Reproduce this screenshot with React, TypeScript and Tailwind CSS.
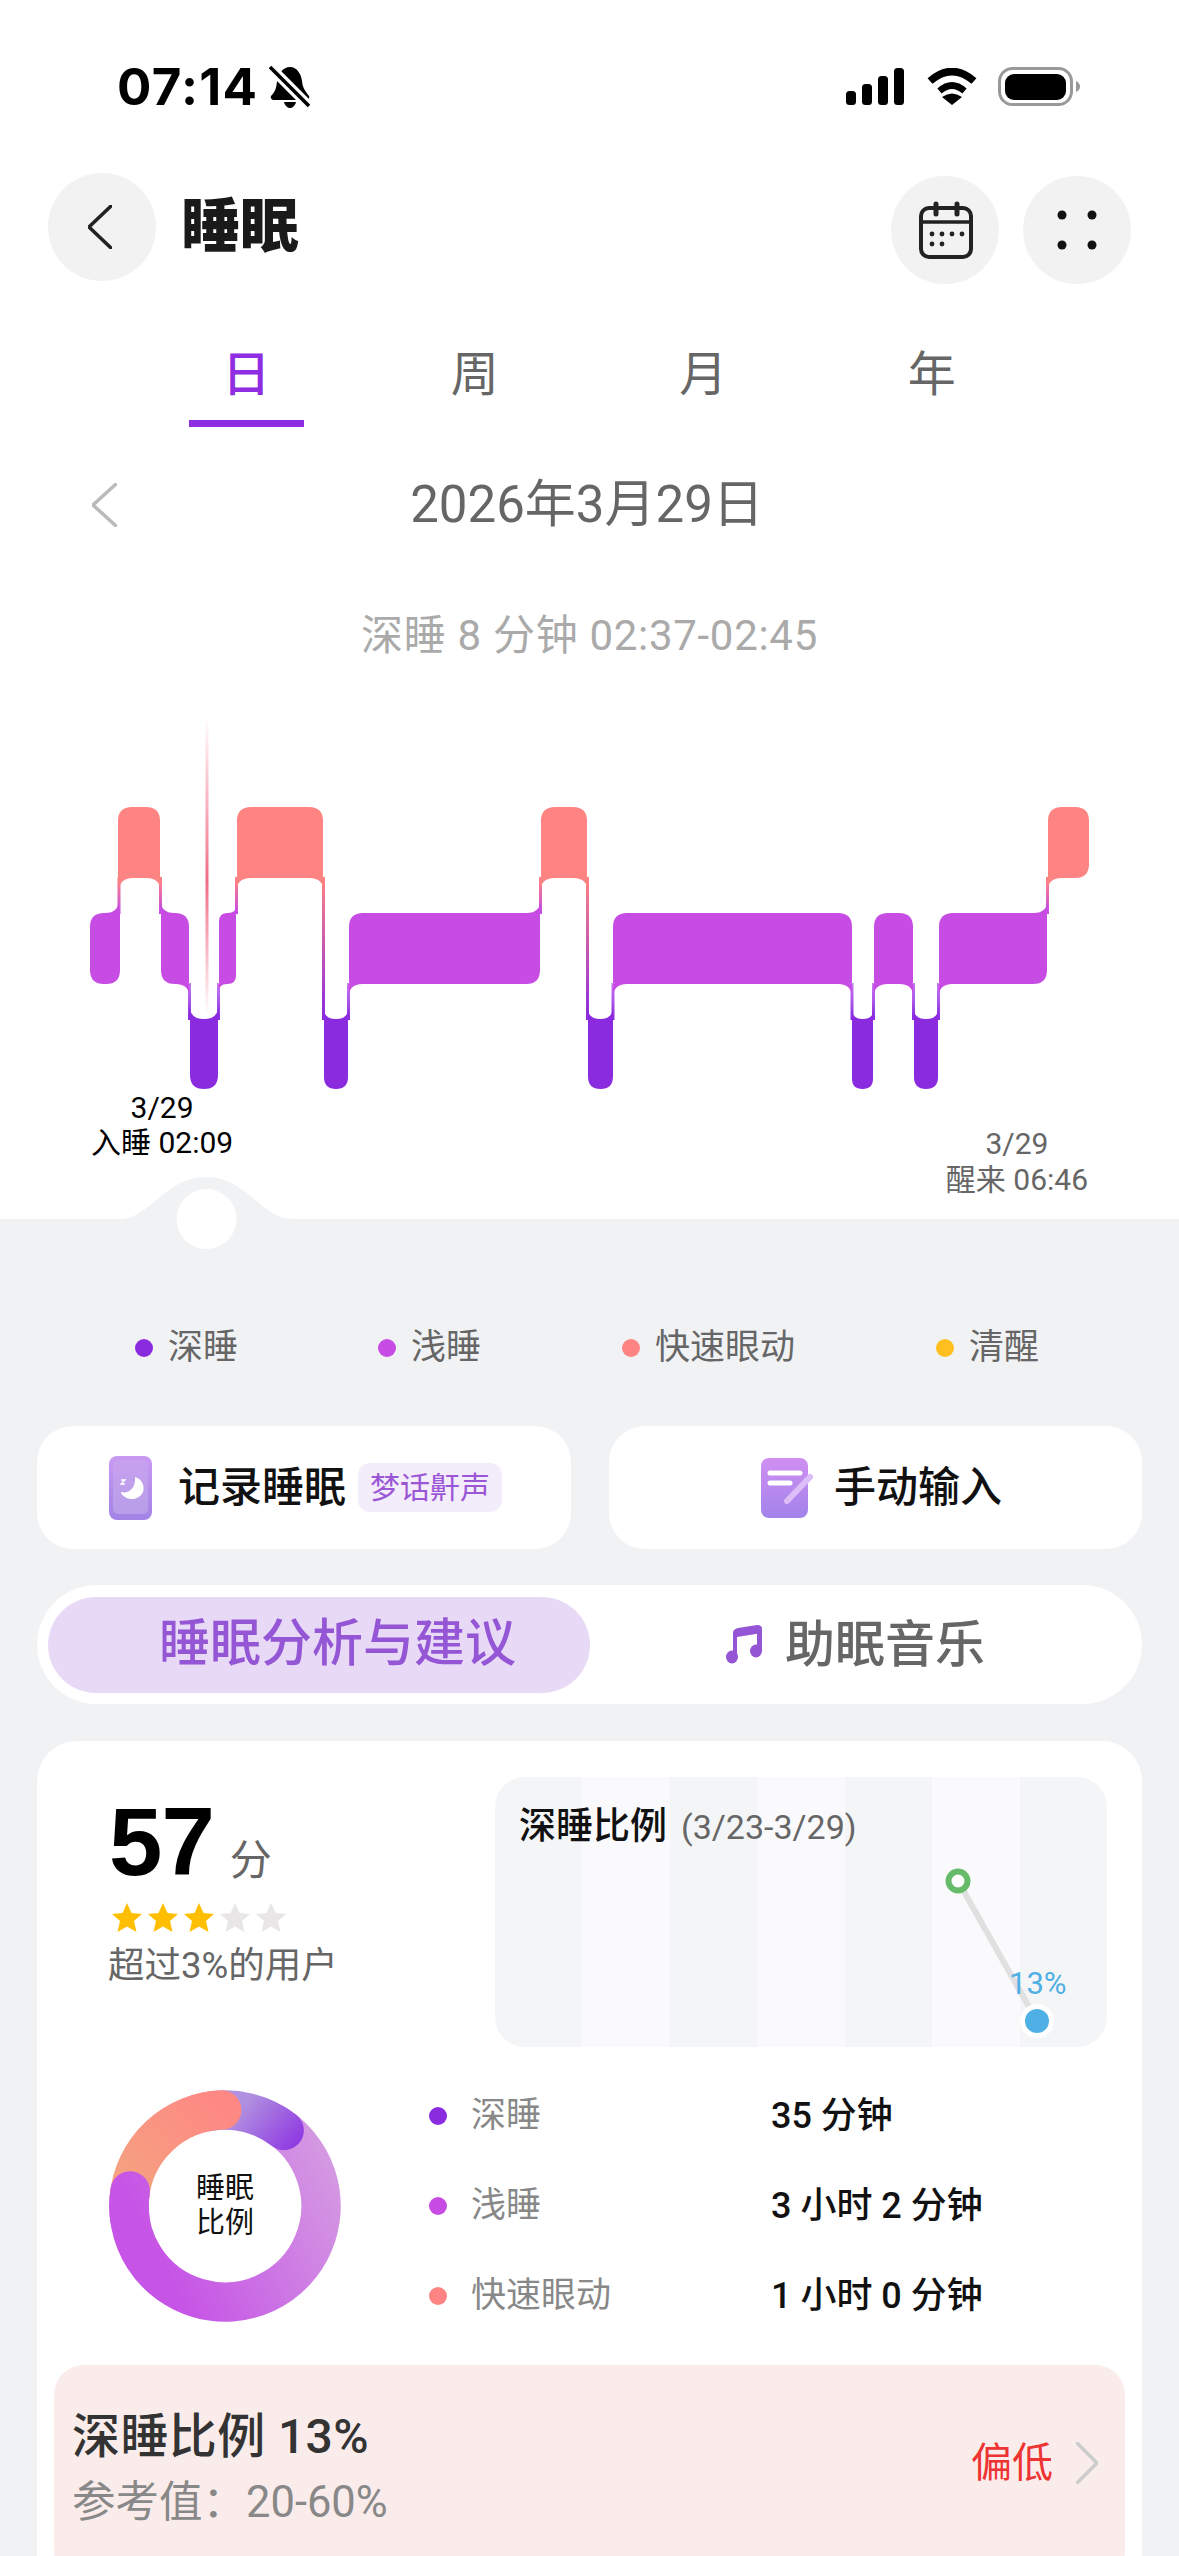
import React from 'react';

type Bar = { x0: number; x1: number; level: 'P' | 'L' | 'D' };

const LEVELS = {
  P: { top: 807, bottom: 878, color: '#fe8383' },
  L: { top: 913, bottom: 984, color: '#c74ce3' },
  D: { top: 1019, bottom: 1089, color: '#8b2be0' },
};

const BARS: Bar[] = [
  { x0: 90, x1: 120, level: 'L' },
  { x0: 118, x1: 160, level: 'P' },
  { x0: 161, x1: 189, level: 'L' },
  { x0: 190, x1: 218, level: 'D' },
  { x0: 219, x1: 236, level: 'L' },
  { x0: 237, x1: 323, level: 'P' },
  { x0: 324, x1: 348, level: 'D' },
  { x0: 349, x1: 540, level: 'L' },
  { x0: 541, x1: 587, level: 'P' },
  { x0: 588, x1: 613, level: 'D' },
  { x0: 613, x1: 852, level: 'L' },
  { x0: 852, x1: 873, level: 'D' },
  { x0: 874, x1: 913, level: 'L' },
  { x0: 914, x1: 938, level: 'D' },
  { x0: 939, x1: 1047, level: 'L' },
  { x0: 1048, x1: 1089, level: 'P' },
];

const order = { P: 0, L: 1, D: 2 };

// rounded rect, only corners facing free space get a radius
function barPath(b: Bar, prev?: Bar, next?: Bar) {
  const { top, bottom } = LEVELS[b.level];
  const r = Math.min(14, (b.x1 - b.x0) / 2);
  const tl = prev && order[prev.level] < order[b.level] ? 0 : r;
  const bl = prev && order[prev.level] > order[b.level] ? 0 : r;
  const tr = next && order[next.level] < order[b.level] ? 0 : r;
  const br = next && order[next.level] > order[b.level] ? 0 : r;
  return `M${b.x0 + tl} ${top} H${b.x1 - tr} Q${b.x1} ${top} ${b.x1} ${top + tr} V${bottom - br} Q${b.x1} ${bottom} ${b.x1 - br} ${bottom} H${b.x0 + bl} Q${b.x0} ${bottom} ${b.x0} ${bottom - bl} V${top + tl} Q${b.x0} ${top} ${b.x0 + tl} ${top} Z`;
}

function SleepChart() {
  return (
    <svg width="1179" height="390" viewBox="0 700 1179 390" className="block">
      <defs>
        <linearGradient id="pulse" x1="0" y1="718" x2="0" y2="1015" gradientUnits="userSpaceOnUse">
          <stop offset="0" stopColor="#f0506e" stopOpacity="0" />
          <stop offset="0.55" stopColor="#f0506e" stopOpacity="0.85" />
          <stop offset="1" stopColor="#f0506e" stopOpacity="0" />
        </linearGradient>
        <linearGradient id="PL" x1="0" y1="878" x2="0" y2="913" gradientUnits="userSpaceOnUse">
          <stop offset="0" stopColor="#fe8383" />
          <stop offset="1" stopColor="#c74ce3" />
        </linearGradient>
        <linearGradient id="LD" x1="0" y1="984" x2="0" y2="1019" gradientUnits="userSpaceOnUse">
          <stop offset="0" stopColor="#c77cf0" />
          <stop offset="1" stopColor="#8b2be0" />
        </linearGradient>
        <linearGradient id="PD" x1="0" y1="878" x2="0" y2="1019" gradientUnits="userSpaceOnUse">
          <stop offset="0" stopColor="#fe8383" />
          <stop offset="1" stopColor="#8b2be0" />
        </linearGradient>
      </defs>
      <rect x="205.5" y="718" width="3" height="297" fill="url(#pulse)" />
      {BARS.map((b, i) => (
        <path key={i} d={barPath(b, BARS[i - 1], BARS[i + 1])} fill={LEVELS[b.level].color} />
      ))}
      {BARS.slice(0, -1).map((a, i) => {
        const b = BARS[i + 1];
        const B = (a.x1 + b.x0) / 2;
        const upper = order[a.level] < order[b.level] ? a : b;
        const lower = upper === a ? b : a;
        const upDir = upper === a ? -1 : 1;
        const yUp = LEVELS[upper.level].bottom;
        const yLow = LEVELS[lower.level].top;
        const ru = Math.min(14, (upper.x1 - upper.x0) / 2);
        const rl = Math.min(14, (lower.x1 - lower.x0) / 2);
        const grad = `${upper.level}${lower.level}`;
        return (
          <g key={i}>
            <rect x={B - 1.5} y={yUp - 1} width="3" height={yLow - yUp + 2} fill={`url(#${grad})`} />
            <path
              d={`M${B} ${yUp} L${B + upDir * ru} ${yUp} Q${B} ${yUp} ${B} ${yUp + ru} Z`}
              fill={LEVELS[upper.level].color}
            />
            <path
              d={`M${B} ${yLow} L${B - upDir * rl} ${yLow} Q${B} ${yLow} ${B} ${yLow - rl} Z`}
              fill={LEVELS[lower.level].color}
            />
          </g>
        );
      })}
    </svg>
  );
}

function StatusIcons() {
  return (
    <div className="flex items-center">
      <svg width="58" height="38" viewBox="0 0 58 38" fill="#000">
        <rect x="0" y="23" width="10" height="14" rx="3.5" />
        <rect x="16" y="16" width="10" height="21" rx="3.5" />
        <rect x="32" y="8" width="10" height="29" rx="3.5" />
        <rect x="48" y="0" width="10" height="37" rx="3.5" />
      </svg>
      <svg width="50" height="38" viewBox="0 0 50 38" fill="none" className="ml-[23px]">
        <path d="M3 13 Q25 -6 47 13" stroke="#000" strokeWidth="7.5" />
        <path d="M12.5 23 Q25 12 37.5 23" stroke="#000" strokeWidth="6.5" />
        <path d="M25 37 L15 29 Q25 22 35 29 Z" fill="#000" />
      </svg>
      <svg width="83" height="40" viewBox="0 0 83 40" className="ml-[21px]">
        <rect x="1.5" y="1.5" width="72" height="36" rx="13" fill="none" stroke="#999" strokeWidth="3" />
        <rect x="7" y="7" width="61" height="26" rx="9" fill="#000" />
        <path d="M78 14 Q82 16 82 19.5 Q82 23 78 25 Z" fill="#999" />
      </svg>
    </div>
  );
}

function BellOff() {
  return (
    <svg width="41" height="44" viewBox="0 0 41 44" className="ml-[11px]">
      <path d="M21 2 C28 2 32 9 33 16 C33.500 23 37 27 40 31 C41 33 39 35 37 35 H5 C3 35 1 33 2 31 C6 27 7.500 23 8 16 C9 9 14 2 21 2Z" fill="#000" />
      <path d="M15 37 H27 C26 41 23 43 21 43 C19 43 16 41 15 37Z" fill="#000" />
      <path d="M1 2 L40 41" stroke="#fff" strokeWidth="10" />
      <path d="M1 2 L40 41" stroke="#000" strokeWidth="3.500" />
    </svg>
  );
}

function Chevron({ dir, color, w, h, sw }: { dir: 'l' | 'r'; color: string; w: number; h: number; sw: number }) {
  const d = dir === 'l' ? `M${w - 1} 1 L1 ${h / 2} L${w - 1} ${h - 1}` : `M1 1 L${w - 1} ${h / 2} L1 ${h - 1}`;
  return (
    <svg width={w} height={h} viewBox={`0 0 ${w} ${h}`} fill="none">
      <path d={d} stroke={color} strokeWidth={sw} strokeLinecap="round" strokeLinejoin="round" />
    </svg>
  );
}

function CalendarIcon() {
  return (
    <svg width="60" height="60" viewBox="0 0 60 60" fill="#222">
      <rect x="6" y="8" width="50" height="49" rx="8" fill="none" stroke="#222" strokeWidth="4" />
      <path d="M6 22 H56" stroke="#222" strokeWidth="3.500" />
      <path d="M21 4 V14 M42 4 V14" stroke="#222" strokeWidth="5" strokeLinecap="round" />
      <circle cx="17" cy="34" r="2.400" />
      <circle cx="27" cy="34" r="2.400" />
      <circle cx="37" cy="34" r="2.400" />
      <circle cx="47" cy="34" r="2.400" />
      <circle cx="17" cy="44" r="2.400" />
      <circle cx="27" cy="44" r="2.400" />
    </svg>
  );
}

function MoonIcon() {
  return (
    <svg width="43" height="64" viewBox="0 0 43 64" className="shrink-0">
      <defs>
        <linearGradient id="phone" x1="0" y1="0" x2="0" y2="1">
          <stop offset="0" stopColor="#c99af2" />
          <stop offset="1" stopColor="#a283e6" />
        </linearGradient>
        <linearGradient id="phoneIn" x1="0" y1="0" x2="0" y2="1">
          <stop offset="0" stopColor="#c8a0f0" />
          <stop offset="1" stopColor="#b79ee9" />
        </linearGradient>
      </defs>
      <rect width="43" height="64" rx="8" fill="url(#phone)" />
      <rect x="4" y="4" width="35" height="54" rx="5" fill="url(#phoneIn)" />
      <path d="M26 21 C33 23 36 30 34 36 C31 43 22 45 16 41 C13 39 12 38 12 36 C19 38 27 33 26 21Z" fill="#fff" />
      <path d="M12 24 H16 L12 28 H16" fill="none" stroke="#fff" strokeWidth="1.300" />
    </svg>
  );
}

function NoteIcon() {
  return (
    <svg width="53" height="62" viewBox="0 0 53 62" className="shrink-0">
      <defs>
        <linearGradient id="note" x1="0" y1="0" x2="0" y2="1">
          <stop offset="0" stopColor="#d08ff2" />
          <stop offset="1" stopColor="#a283ea" />
        </linearGradient>
      </defs>
      <rect x="0" y="1" width="47" height="60" rx="8" fill="url(#note)" />
      <path d="M9 16 H39" stroke="#fff" strokeWidth="5" strokeLinecap="round" />
      <path d="M9 26 H29" stroke="#fff" strokeWidth="5" strokeLinecap="round" />
      <path d="M49 20 L26 44" stroke="#dcbdf8" strokeWidth="6" strokeLinecap="round" />
    </svg>
  );
}

function MusicIcon() {
  return (
    <svg width="36" height="39" viewBox="0 0 36 39" fill="#9456d4">
      <path d="M7 8 C7 5 9 4 12 3 L31 0 C34 0 36 1 36 4 V8 L11 12 V32 H7 Z" />
      <path d="M31 6 H36 V26 H31 Z" />
      <ellipse cx="6" cy="32" rx="6" ry="6.500" />
      <ellipse cx="30" cy="26" rx="6" ry="6.500" />
    </svg>
  );
}

function Star({ on }: { on: boolean }) {
  return (
    <svg width="30" height="29" viewBox="0 0 30 29" fill={on ? '#ffbf00' : '#e8e6e6'}>
      <polygon points="15,0 19.500,10 30,11 22,18 24.500,29 15,23.500 5.500,29 8,18 0,11 10.500,10" />
    </svg>
  );
}

function Donut() {
  const cx = 116;
  const cy = 116;
  const R = 96;
  const sw = 39.5;
  const pt = (a: number) => {
    const t = (a * Math.PI) / 180;
    return `${(cx + R * Math.sin(t)).toFixed(2)} ${(cy - R * Math.cos(t)).toFixed(2)}`;
  };
  const arc = (a0: number, a1: number) => `M${pt(a0)} A${R} ${R} 0 ${a1 - a0 > 180 ? 1 : 0} 1 ${pt(a1)}`;
  return (
    <div className="relative w-[232px] h-[232px] shrink-0">
      <svg width="232" height="232" viewBox="0 0 232 232" fill="none">
        <defs>
          <linearGradient id="dLight" x1="220" y1="60" x2="40" y2="150" gradientUnits="userSpaceOnUse">
            <stop offset="0" stopColor="#d49ae2" />
            <stop offset="1" stopColor="#c654e6" />
          </linearGradient>
          <linearGradient id="dDeep" x1="130" y1="20" x2="190" y2="70" gradientUnits="userSpaceOnUse">
            <stop offset="0" stopColor="#b090e0" />
            <stop offset="1" stopColor="#8a2be2" />
          </linearGradient>
          <linearGradient id="dPink" x1="110" y1="10" x2="20" y2="90" gradientUnits="userSpaceOnUse">
            <stop offset="0" stopColor="#fe8884" />
            <stop offset="1" stopColor="#f5a080" />
          </linearGradient>
        </defs>
        <path d={arc(30, 279)} stroke="url(#dLight)" strokeWidth={sw} strokeLinecap="round" />
        <path d={arc(350, 398)} stroke="url(#dDeep)" strokeWidth={sw} strokeLinecap="round" />
        <path d={arc(275, 358)} stroke="url(#dPink)" strokeWidth={sw} strokeLinecap="round" />
        <path d={arc(262, 279)} stroke="url(#dLight)" strokeWidth={sw} strokeLinecap="round" />
      </svg>
      <div className="absolute inset-0 flex flex-col items-center justify-center text-[29px] leading-[35px] text-[#111]">
        <span>睡眠</span>
        <span>比例</span>
      </div>
    </div>
  );
}

const legend = [
  { name: '深睡', color: 'bg-[#8b2be0]', w: 'w-[243px]' },
  { name: '浅睡', color: 'bg-[#c74ce3]', w: 'w-[244px]' },
  { name: '快速眼动', color: 'bg-[#fe8383]', w: 'w-[314px]' },
  { name: '清醒', color: 'bg-[#ffbf1f]', w: 'w-[200px]' },
];

const ratios = [
  { name: '深睡', value: '35 分钟', color: 'bg-[#8b2be0]' },
  { name: '浅睡', value: '3 小时 2 分钟', color: 'bg-[#c74ce3]' },
  { name: '快速眼动', value: '1 小时 0 分钟', color: 'bg-[#fe8383]' },
];

const strips = ['bg-[#f4f5f7]', 'bg-[#fafafc]', 'bg-[#f4f5f7]', 'bg-[#fafafc]', 'bg-[#f4f5f7]', 'bg-[#fafafc]', 'bg-[#f4f5f7]'];

export default function App() {
  return (
    <div
      lang="zh-CN"
      className="relative w-[1179px] h-[2556px] overflow-hidden bg-[#f1f2f4] font-['Roboto','Noto_Sans_CJK_SC',sans-serif]"
    >
      <div className="bg-white h-[1219px]">
        {/* status bar */}
        <div className="flex justify-between items-center h-[173px] pl-[117px] pr-[98px]">
          <div className="flex items-center">
            <span className="font-['Inter'] text-[51px] leading-[50px] font-bold text-black tracking-[1.3px]">07:14</span>
            <BellOff />
          </div>
          <StatusIcons />
        </div>

        {/* header */}
        <div className="flex items-start justify-between px-[48px] h-[111px]">
          <div className="flex items-center">
            <div className="w-[108px] h-[108px] rounded-full bg-[#f2f2f2] flex items-center justify-center pr-[4px]">
              <Chevron dir="l" color="#222" w={24} h={44} sw={3.5} />
            </div>
            <span className="ml-[25px] text-[59px] leading-[70px] font-black text-[#1a1a1a]">睡眠</span>
          </div>
          <div className="flex gap-[24px] mt-[3px]">
            <div className="w-[108px] h-[108px] rounded-full bg-[#f2f2f2] flex items-center justify-center">
              <CalendarIcon />
            </div>
            <div className="w-[108px] h-[108px] rounded-full bg-[#f2f2f2] flex items-center justify-center">
              <svg width="40" height="40" viewBox="0 0 40 40" fill="#111">
                <circle cx="5" cy="5" r="4.500" />
                <circle cx="35" cy="5" r="4.500" />
                <circle cx="5" cy="35" r="4.500" />
                <circle cx="35" cy="35" r="4.500" />
              </svg>
            </div>
          </div>
        </div>

        {/* tabs */}
        <div className="flex pl-[132px] pt-[61px] h-[143px]">
          {['日', '周', '月', '年'].map((t, i) => (
            <div key={t} className="w-[228.5px] flex flex-col items-center">
              <span className={`text-[48px] leading-[60px] ${i === 0 ? 'text-[#8e2de2] font-medium' : 'text-[#666]'}`}>{t}</span>
              {i === 0 && <div className="mt-[15px] w-[115px] h-[7px] bg-[#8e2de2]" />}
            </div>
          ))}
        </div>

        {/* date */}
        <div className="flex items-center h-[60px] mt-[48px] pl-[92px] pr-[122px]">
          <Chevron dir="l" color="#bbb" w={25} h={44} sw={3.5} />
          <span className="flex-1 text-center text-[51px] leading-[60px] text-[#666]">2026年3月29日</span>
        </div>

        <div className="mt-[76px] h-[50px] text-center text-[42px] leading-[50px] text-[#aaa] tracking-[0.7px]">深睡 8 分钟 02:37-02:45</div>

        <div className="mt-[39px]">
          <SleepChart />
        </div>

        <div className="flex justify-between pl-[91px] pr-[91px]">
          <div className="text-center text-[30px] leading-[35px] text-black">
            <div>3/29</div>
            <div>入睡 02:09</div>
          </div>
          <div className="mt-[36px] text-center text-[30px] leading-[36px] text-[#666]">
            <div>3/29</div>
            <div>醒来 06:46</div>
          </div>
        </div>
      </div>

      {/* slider knob */}
      <svg width="200" height="80" viewBox="110 1170 200 80" className="absolute left-[110px] top-[1170px]">
        <path d="M120 1219 C150 1219 165 1177 206 1177 C247 1177 262 1219 292 1219 Z" fill="#f1f2f4" />
        <circle cx="206.500" cy="1219" r="30" fill="#fff" />
      </svg>

      {/* legend */}
      <div className="flex items-center h-[50px] mt-[104px] pl-[135px]">
        {legend.map((l) => (
          <div key={l.name} className={`flex items-center gap-[15px] ${l.w}`}>
            <span className={`w-[18px] h-[18px] rounded-full ${l.color}`} />
            <span className="text-[35px] leading-[50px] text-[#666]">{l.name}</span>
          </div>
        ))}
      </div>

      {/* action buttons */}
      <div className="flex gap-[38px] mt-[53px] mx-[37px]">
        <div className="w-[534px] h-[123px] rounded-[36px] bg-white flex items-center pl-[72px]">
          <MoonIcon />
          <span className="ml-[26px] text-[42px] font-medium text-[#111]">记录睡眠</span>
          <span className="ml-[12px] h-[49px] px-[12px] rounded-[12px] bg-[#f3ecfb] text-[30px] leading-[49px] text-[#9b56d6]">梦话鼾声</span>
        </div>
        <div className="w-[533px] h-[123px] rounded-[36px] bg-white flex items-center pl-[152px]">
          <NoteIcon />
          <span className="ml-[20px] text-[42px] font-medium text-[#111]">手动输入</span>
        </div>
      </div>

      {/* segment */}
      <div className="flex items-center h-[119px] mt-[36px] mx-[37px] px-[11px] rounded-full bg-white">
        <div className="w-[542px] h-[96px] rounded-full bg-[#e8daf6] pl-[111px] text-[51px] leading-[94px] font-medium text-[#9456d4]">睡眠分析与建议</div>
        <div className="flex items-center pl-[136px]">
          <MusicIcon />
          <span className="ml-[23px] text-[50px] leading-[94px] font-medium text-[#666]">助眠音乐</span>
        </div>
      </div>

      {/* score card */}
      <div className="mt-[37px] mx-[37px] h-[900px] rounded-[40px] bg-white pt-[36px]">
        <div className="flex justify-between pl-[72px] pr-[35px]">
          <div className="pt-[17px]">
            <div className="flex items-baseline">
              <span className="font-['Liberation_Sans'] text-[96px] leading-[95px] font-bold text-black tracking-[-1px]">57</span>
              <span className="ml-[16px] text-[42px] text-[#666]">分</span>
            </div>
            <div className="flex gap-[6px] mt-[11px] ml-[3px]">
              {[0, 1, 2, 3, 4].map((i) => (
                <Star key={i} on={i < 3} />
              ))}
            </div>
            <div className="mt-[11px] ml-[-1px] text-[36.5px] leading-[46px] text-[#666]">超过3%的用户</div>
          </div>
          <div className="relative w-[612px] h-[270px] rounded-[30px] overflow-hidden">
            <div className="absolute inset-0 flex">
              {strips.map((s, i) => (
                <div key={i} className={`flex-1 ${s}`} />
              ))}
            </div>
            <svg width="612" height="270" viewBox="0 0 612 270" className="absolute inset-0">
              <path d="M463 104 L542 244" stroke="#e0e0e0" strokeWidth="6" />
              <circle cx="463" cy="104" r="9.500" fill="#fff" stroke="#66bb6a" strokeWidth="6" />
              <circle cx="542" cy="244" r="17" fill="#fff" />
              <circle cx="542" cy="244" r="12" fill="#4fb0e5" />
            </svg>
            <div className="absolute left-[514px] top-[187px] text-[31px] leading-[40px] text-[#4fb0e5]">13%</div>
            <div className="relative flex items-baseline pl-[24px] pt-[22px]">
              <span className="text-[37px] leading-[56px] font-medium text-[#111]">深睡比例</span>
              <span className="ml-[14px] text-[34px] text-[#666]">(3/23-3/29)</span>
            </div>
          </div>
        </div>

        <div className="flex items-center mt-[24px] pl-[72px] h-[270px]">
          <Donut />
          <div className="ml-[88px]">
            {ratios.map((r) => (
              <div key={r.name} className="flex items-center h-[90px]">
                <span className={`w-[18px] h-[18px] rounded-full ${r.color}`} />
                <span className="ml-[24px] w-[300px] text-[35px] text-[#888]">{r.name}</span>
                <span className="text-[36px] font-medium text-[#111]">{r.value}</span>
              </div>
            ))}
          </div>
        </div>

        <div className="flex justify-between mt-[24px] mx-[17px] h-[215px] rounded-[30px] bg-[#faeceb] pl-[18px] pr-[27px]">
          <div className="pt-[42px]">
            <div className="text-[48px] leading-[60px] font-medium text-[#333] tracking-[0.4px]">深睡比例 13%</div>
            <div className="mt-[6px] text-[43.5px] leading-[60px] text-[#888]">参考值：20-60%</div>
          </div>
          <div className="flex items-center h-[60px] mt-[68px]">
            <span className="text-[41px] leading-[60px] text-[#ee3333]">偏低</span>
            <span className="ml-[23px]">
              <Chevron dir="r" color="#ccc" w={22} h={42} sw={3.5} />
            </span>
          </div>
        </div>
      </div>
    </div>
  );
}
